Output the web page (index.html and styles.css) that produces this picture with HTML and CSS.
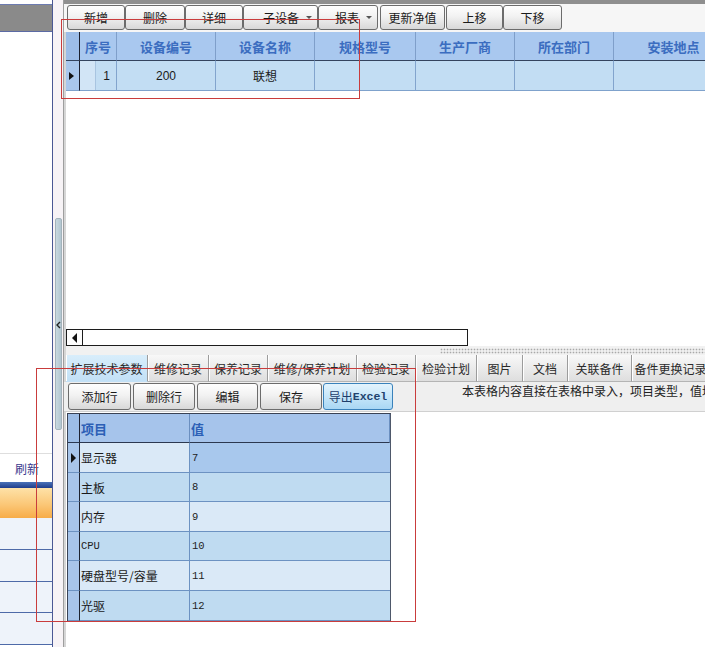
FILE: index.html
```html
<!DOCTYPE html>
<html lang="zh-CN">
<head>
<meta charset="utf-8">
<title>设备管理</title>
<link rel="stylesheet" href="styles.css">
</head>
<body>
<div class="app">
  <aside class="side">
    <div class="side-top"></div>
    <div class="side-head"></div>
    <div class="side-fill"></div>
    <div class="side-refresh">刷新</div>
    <div class="side-bar"></div>
    <div class="side-sel"></div>
    <div class="side-row"></div>
    <div class="side-row"></div>
    <div class="side-row short"></div>
    <div class="side-row"></div>
  </aside>

  <div class="vscroll">
    <div class="vthumb"></div>
    <svg class="collapse" width="5" height="8" viewBox="0 0 5 8"><polyline points="4,1 1,4 4,7" fill="none" stroke="#222" stroke-width="1.4"/></svg>
  </div>

  <main class="main">
    <div class="main-top"></div>
    <div class="toolbar">
      <button class="btn b-add">新增</button>
      <button class="btn b-del">删除</button>
      <button class="btn b-det">详细</button>
      <button class="btn drop b-sub">子设备<i class="caret"></i></button>
      <button class="btn drop b-rep">报表<i class="caret"></i></button>
      <button class="btn b-upd">更新净值</button>
      <button class="btn b-up">上移</button>
      <button class="btn b-down">下移</button>
    </div>

    <div class="grid-area">
      <div class="tgrid">
        <div class="th ind"></div>
        <div class="th">序号</div>
        <div class="th">设备编号</div>
        <div class="th">设备名称</div>
        <div class="th">规格型号</div>
        <div class="th">生产厂商</div>
        <div class="th">所在部门</div>
        <div class="th">安装地点</div>

        <div class="td ind"><i class="tri"></i></div>
        <div class="td seq"><span class="seq-sub"></span><span class="seq-num">1</span></div>
        <div class="td">200</div>
        <div class="td">联想</div>
        <div class="td"></div>
        <div class="td"></div>
        <div class="td"></div>
        <div class="td"></div>
      </div>
    </div>

    <div class="hrow">
      <div class="hscroll">
        <span class="hs-btn"><i class="tri-left"></i></span>
      </div>
    </div>

    <div class="strip"><div class="dots"></div></div>

    <div class="tabs">
      <div class="tab active w82">扩展技术参数</div>
      <div class="tab w61">维修记录</div>
      <div class="tab w59">保养记录</div>
      <div class="tab w89">维修/保养计划</div>
      <div class="tab w59">检验记录</div>
      <div class="tab w61">检验计划</div>
      <div class="tab w46">图片</div>
      <div class="tab w45">文档</div>
      <div class="tab w64">关联备件</div>
      <div class="tab w78">备件更换记录</div>
    </div>

    <div class="toolbar2">
      <button class="btn2 w63">添加行</button>
      <button class="btn2 w62">删除行</button>
      <button class="btn2 w61">编辑</button>
      <button class="btn2 w62">保存</button>
      <button class="btn2 export">导出<span class="xl">Excel</span></button>
      <span class="hint">本表格内容直接在表格中录入，项目类型，值均可自由填写</span>
    </div>

    <div class="pgrid">
      <div class="ph ind"></div>
      <div class="ph">项目</div>
      <div class="ph">值</div>

      <div class="pi r1"><i class="tri"></i></div>
      <div class="pc light r1">显示器</div>
      <div class="pc sel r1 num">7</div>

      <div class="pi r2"></div>
      <div class="pc dark r2">主板</div>
      <div class="pc dark r2 num">8</div>

      <div class="pi r1"></div>
      <div class="pc light r1">内存</div>
      <div class="pc light r1 num">9</div>

      <div class="pi r2"></div>
      <div class="pc dark r2 num">CPU</div>
      <div class="pc dark r2 num">10</div>

      <div class="pi r1"></div>
      <div class="pc light r1">硬盘型号/容量</div>
      <div class="pc light r1 num">11</div>

      <div class="pi r2"></div>
      <div class="pc dark r2">光驱</div>
      <div class="pc dark r2 num">12</div>
    </div>
  </main>
</div>

<div class="anno anno-top"></div>
<div class="anno anno-bottom"></div>
</body>
</html>
```

FILE: styles.css
```css
* { box-sizing: border-box; }
html, body { margin: 0; padding: 0; }
body {
  width: 705px;
  height: 647px;
  overflow: hidden;
  position: relative;
  background: #fff;
  font-family: "Noto Sans CJK SC", "Liberation Sans", sans-serif;
  font-size: 12px;
  color: #1e1e1e;
}
.app { display: flex; height: 647px; }

/* ---------- left side panel ---------- */
.side {
  width: 53px;
  flex: none;
  display: flex;
  flex-direction: column;
  border-right: 1px solid #4b5894;
  background: #fff;
}
.side-top { height: 4px; }
.side-head {
  height: 28px;
  background: #8a8a8a;
  border-top: 1px solid #6d7bb0;
  border-bottom: 1px solid #5b6aa4;
}
.side-fill { height: 421px; }
.side-refresh {
  height: 29px;
  border-top: 1px solid #dedede;
  padding-left: 15px;
  line-height: 30px;
  color: #3a3a8e;
  font-size: 12px;
}
.side-bar { height: 6px; background: linear-gradient(#4a72b8, #1f3d8c); }
.side-sel { height: 30px; background: linear-gradient(#fee2a8, #fbc777 55%, #f7ac48); }
.side-row { height: 32px; background: #eef3fa; border-bottom: 1px solid #4e6aa8; }
.side-row.short { height: 31px; }

/* ---------- splitter scroll ---------- */
.vscroll {
  width: 10px;
  flex: none;
  position: relative;
  background: #f7f3f6;
}
.vthumb {
  margin: 218px 0 0 2px;
  width: 7px;
  height: 212px;
  background: linear-gradient(90deg, #c8d8e0, #b2c6d0);
  border: 1px solid #a3b3bb;
  border-radius: 2px;
}
.collapse { position: absolute; left: 3px; top: 321px; }

/* ---------- main ---------- */
.main {
  width: 642px;
  flex: none;
  display: flex;
  flex-direction: column;
  border-left: 1px solid #9e9e9e;
  box-shadow: inset 2px 0 #d6d6d6;
  overflow: hidden;
  background: #fff;
}
.main-top { height: 4px; background: #8f8f8f; flex: none; }

.toolbar {
  height: 28px;
  flex: none;
  display: flex;
  align-items: flex-start;
  padding: 1px 0 0 3px;
  background: #f6f6f6;
}
.btn, .btn2 {
  flex: none;
  display: flex;
  align-items: center;
  justify-content: center;
  padding: 0;
  border: 1px solid #6c6c6c;
  border-radius: 3px;
  background: linear-gradient(#fefefe, #f2f2f2 45%, #d8d8d8);
  font-family: "Noto Sans CJK SC", sans-serif;
  font-size: 12px;
  color: #1a1a1a;
}
.btn { height: 25px; }
.b-add { width: 58px; }
.b-del { width: 60px; }
.b-det { width: 58px; }
.b-sub { width: 75px; padding-left: 19px; }
.b-rep { width: 60px; padding-left: 16px; }
.b-upd { width: 65px; margin-left: 2px; }
.b-up { width: 57px; margin-left: 1px; }
.b-down { width: 59px; }
.btn.drop { justify-content: flex-start; }
.caret {
  margin-left: auto;
  margin-right: 5px;
  width: 0; height: 0;
  border-left: 3px solid transparent;
  border-right: 3px solid transparent;
  border-top: 3px solid #555;
}

/* top grid */
.grid-area {
  height: 297px;
  flex: none;
  margin-left: 2px;
  background: #fff;
  overflow: hidden;
}
.tgrid {
  display: grid;
  grid-template-columns: 14px 37px 99px 99px 101px 99px 99px 120px;
  grid-template-rows: 29px 30px;
  width: max-content;
}
.th {
  display: flex; align-items: center; justify-content: center;
  background: #a9c8ef;
  border-right: 1px solid #7f9fca;
  border-bottom: 1px solid #34445e;
  color: #3b6dc0;
  font-weight: bold;
  font-size: 13px;
}
.th.ind { background: #9dbde8; border-right-color: #1b1f2e; }
.td {
  display: flex; align-items: center; justify-content: center;
  background: #c2ddf3;
  border-right: 1px solid #82a4cd;
  border-bottom: 1px solid #7fa2cc;
  font-family: "Liberation Sans", "Noto Sans CJK SC", sans-serif;
  font-size: 12px;
  color: #1a1a1a;
}
.td.ind { background: #a9c7ec; border-right-color: #1b1f2e; justify-content: flex-start; padding-left: 3px; }
.tri {
  width: 0; height: 0;
  border-top: 4px solid transparent;
  border-bottom: 4px solid transparent;
  border-left: 5px solid #111;
}
.td.seq { justify-content: flex-start; }
.seq-sub { width: 16px; height: 100%; background: #d2e5f6; border-right: 1px solid #a8c4e0; }
.seq-num { flex: 1; text-align: center; padding-left: 1px; }

/* horizontal scrollbar row */
.hrow { height: 17px; flex: none; margin-left: 2px; background: #fff; }
.hscroll {
  width: 402px; height: 17px;
  border: 1px solid #1c1c1c;
  background: #fff;
  display: flex;
}
.hs-btn {
  width: 16px; height: 100%;
  border-right: 1px solid #1c1c1c;
  display: flex; align-items: center; justify-content: center;
  background: #fdfdfd;
}
.tri-left {
  width: 0; height: 0;
  border-top: 5px solid transparent;
  border-bottom: 5px solid transparent;
  border-right: 5px solid #111;
}

.strip {
  height: 9px; flex: none;
  margin-left: 2px;
  background: #f1f1f1;
  display: flex;
}
.dots {
  margin: 2px 0 0 auto;
  width: 265px; height: 6px;
  background-color: #efefef;
  background-image: radial-gradient(circle, #a9a9a9 0.7px, transparent 1.1px);
  background-size: 3px 3px;
}

/* tabs */
.tabs {
  height: 27px; flex: none;
  margin-left: 2px;
  display: flex;
  background: #ececec;
  overflow: hidden;
}
.tab {
  flex: none;
  display: flex; align-items: center; justify-content: center;
  white-space: nowrap;
  background: linear-gradient(#f8f8f8, #ebebeb 50%, #dedede);
  border-right: 1px solid #9c9c9c;
  border-bottom: 1px solid #b4b4b4;
  box-shadow: inset 1px 0 #ffffff;
  color: #2a2a2a;
  font-size: 12px;
}
.tab.active { background: linear-gradient(#d8edfb, #c2e0f6); border-bottom-color: #c2e0f6; }
.w45 { width: 45px; } .w46 { width: 46px; } .w59 { width: 59px; } .w61 { width: 61px; }
.w62 { width: 62px; } .w63 { width: 63px; } .w64 { width: 64px; } .w78 { width: 78px; }
.w82 { width: 82px; } .w89 { width: 89px; }

/* second toolbar */
.toolbar2 {
  height: 30px; flex: none;
  display: flex;
  align-items: flex-start;
  padding: 1px 0 0 4px;
  gap: 2px;
  background: #efefef;
  border-bottom: 1px solid #d0d0d0;
}
.btn2 { height: 27px; }
.btn2.export {
  width: 70px;
  margin-left: -1px;
  border-color: #3a82bb;
  background: linear-gradient(#e4f4fd, #c6e6f9 50%, #a9d7f4);
  color: #1d3d6a;
}
.xl {
  font-family: "Liberation Mono", monospace;
  font-weight: bold;
  font-size: 11.5px;
  color: #23436e;
}
.hint {
  margin-left: 67px;
  line-height: 16px;
  white-space: nowrap;
  font-size: 12px;
  color: #222;
}

/* property grid */
.pgrid {
  flex: none;
  margin: 1px 0 0 3px;
  width: 324px;
  display: grid;
  grid-template-columns: 12px 110px 200px;
  grid-template-rows: 29px 30px 29px 30px 29px 30px 30px;
  border-left: 1px solid #3a4254;
  border-top: 1px solid #3a4254;
  border-right: 1px solid #4e586a;
}
.ph {
  display: flex; align-items: center;
  padding-left: 1px;
  background: #a6c4eb;
  border-right: 1px solid #6b8fc0;
  border-bottom: 1px solid #2b3850;
  color: #2c5fb6;
  font-weight: bold;
  font-size: 13px;
}
.ph.ind { background: #9dbde6; border-right-color: #1e2230; }
.ph:last-child { border-right: none; padding-left: 2px; }
.pi {
  display: flex; align-items: center; justify-content: center;
  background: #a8c5ea;
  border-right: 1px solid #1e2230;
  border-bottom: 1px solid #6c92c2;
}
.pi .tri { border-top-width: 5px; border-bottom-width: 5px; }
.pc {
  display: flex; align-items: center;
  padding-left: 1px;
  border-right: 1px solid #6c92c2;
  border-bottom: 1px solid #6c92c2;
  font-size: 12px;
  color: #1a1a1a;
}
.pc:nth-child(3n) { border-right: none; padding-left: 2px; }
.pc.light { background: #dae9f7; }
.pc.dark { background: #bfdbf1; }
.pc.sel { background: #a8c8ed; }
.pc.num {
  font-family: "Liberation Mono", "Noto Sans CJK SC", monospace;
  font-size: 10.5px;
  color: #222;
}

/* red annotation boxes drawn over the screenshot */
.anno { position: absolute; border: 1px solid #c93c3c; pointer-events: none; }
.anno-top { left: 61px; top: 19px; width: 299px; height: 80px; }
.anno-bottom { left: 36px; top: 368px; width: 380px; height: 254px; }
```
